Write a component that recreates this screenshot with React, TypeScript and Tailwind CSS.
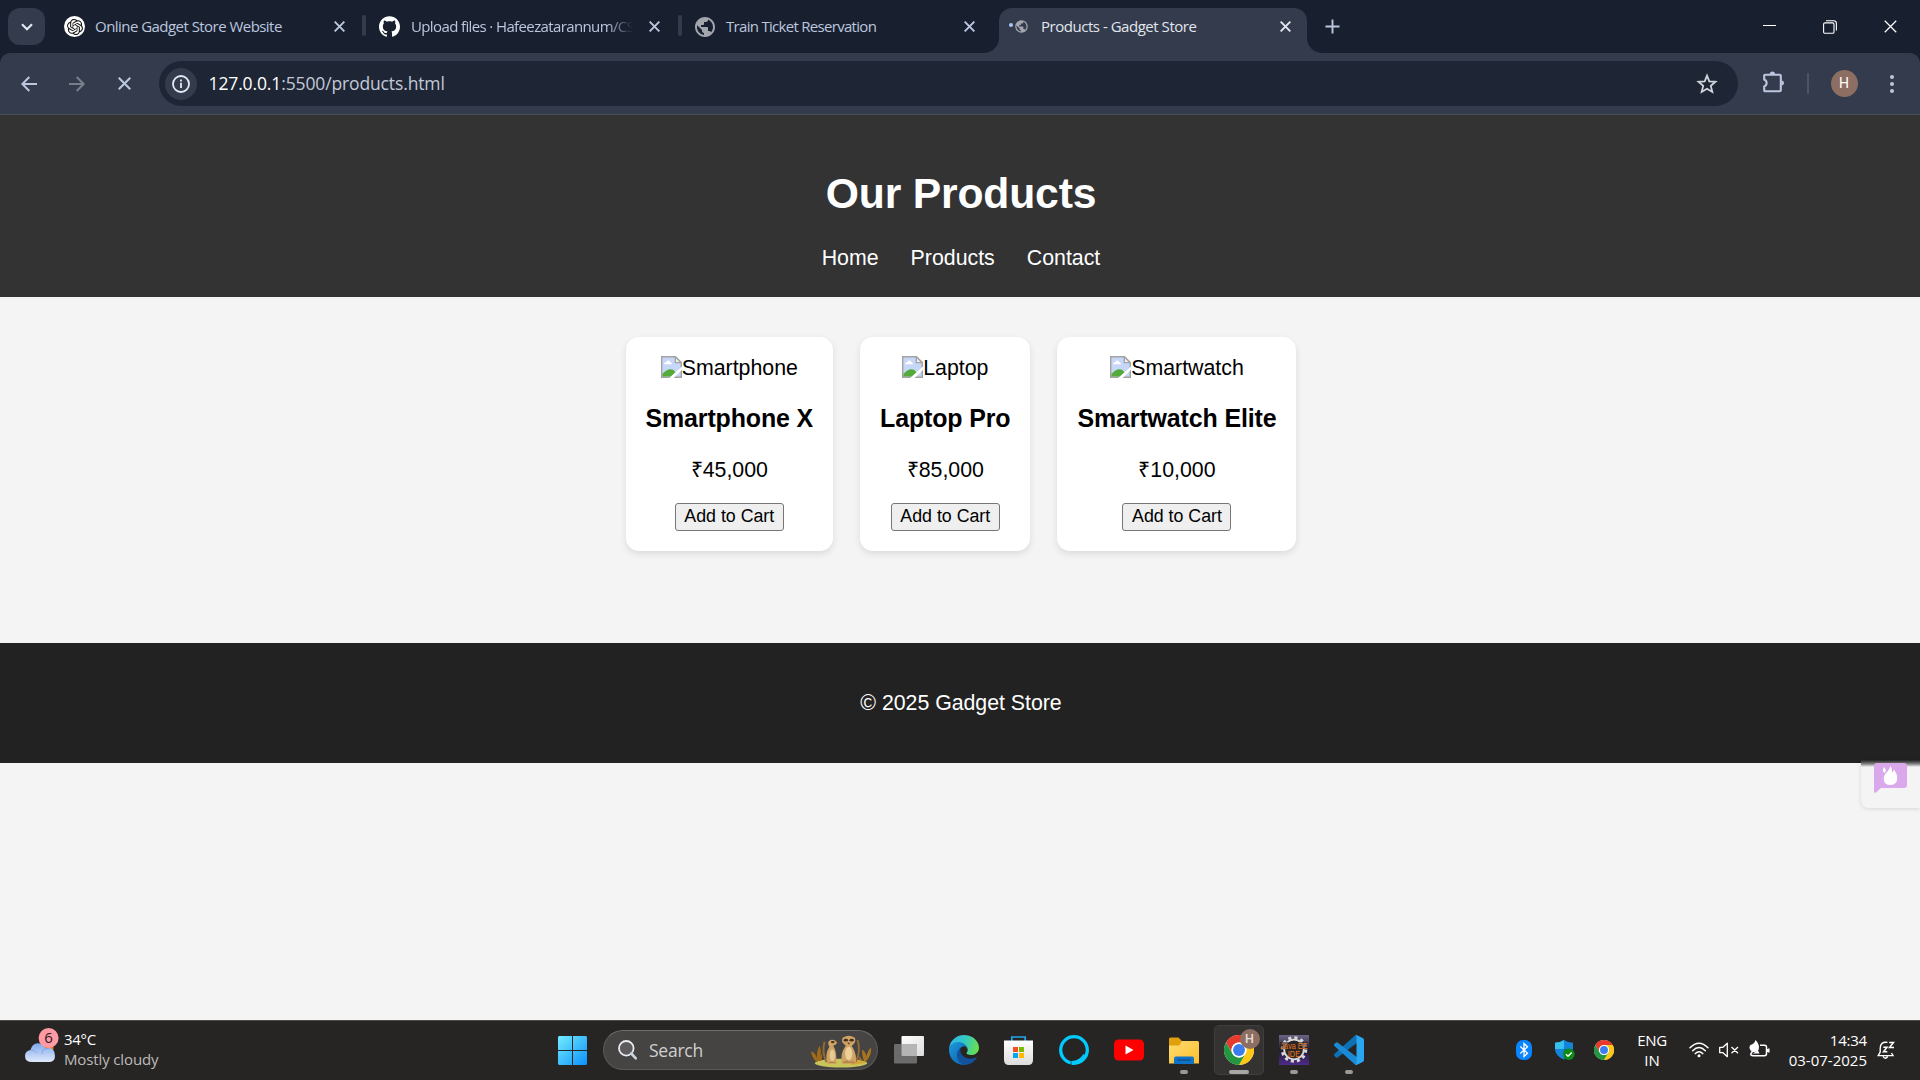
import React from 'react';
import { SiOpenai, SiGithub } from 'react-icons/si';
import { MdPublic } from 'react-icons/md';

function Close({ className = '', s = 11, w = 2.1 }: { className?: string; s?: number; w?: number }) {
  return (
    <svg width={s} height={s} viewBox="0 0 12 12" className={className} fill="none" stroke="currentColor" strokeWidth={w}>
      <path d="M.7 .7L11.3 11.3M11.3 .7L.7 11.3" />
    </svg>
  );
}

function TabStrip() {
  return (
    <div className="h-[53px] bg-[#182030] flex items-start text-[15px] leading-[22px] text-[#bcc6de]">
      <div className="ml-2 mt-2 w-[37px] h-[37px] rounded-[12px] bg-[#333b4c] flex items-center justify-center">
        <svg width="12" height="8" viewBox="0 0 12 8" fill="none" stroke="#e4e8f4" strokeWidth="2.2"><path d="M1 1.2L6 6.2L11 1.2" /></svg>
      </div>
      <div className="ml-[19px] w-[298px] h-[53px] flex items-center">
        <div className="w-[21px] h-[21px] rounded-full bg-white flex items-center justify-center">
          <SiOpenai size={16} color="#111" />
        </div>
        <span className="ml-[10px] pb-px w-[239px] whitespace-nowrap tracking-[-0.54px]">Online Gadget Store Website</span>
        <Close />
      </div>
      <div className="mt-[15px] w-[4px] h-[21px] rounded-[2px] bg-[#333b4c]" />
      <div className="ml-[13px] w-[299px] h-[53px] flex items-center">
        <SiGithub size={21} color="#fff" />
        <span className="ml-[11px] pb-px w-[222px] whitespace-nowrap overflow-hidden tracking-[-0.62px] [mask-image:linear-gradient(to_right,black_88%,transparent_100%)]">Upload files · Hafeezatarannum/CS</span>
        <Close className="ml-[16px]" />
      </div>
      <div className="mt-[15px] w-[4px] h-[21px] rounded-[2px] bg-[#333b4c]" />
      <div className="ml-[11px] w-[290px] h-[53px] flex items-center">
        <MdPublic size={24} color="#a3a7ad" />
        <span className="ml-[9px] pb-px w-[238px] whitespace-nowrap tracking-[-0.7px]">Train Ticket Reservation</span>
        <Close />
      </div>
      <div className="w-[16px] h-[53px] bg-[#333b4c]"><div className="w-[16px] h-[53px] bg-[#182030] rounded-br-[15px]" /></div>
      <div className="w-[308px] h-[53px] bg-[#182030]">
        <div className="mt-2 h-[45px] rounded-t-[13px] bg-[#333b4c] text-[#e2e6ee] flex items-center pb-2">
          <div className="ml-[10px] mb-1 w-[4px] h-[4px] rounded-full bg-[#a8c7fa]" />
          <MdPublic size={15} color="#a3a7ad" className="ml-[1px]" />
          <span className="ml-[12px] pb-px w-[239px] whitespace-nowrap tracking-[-0.47px]">Products - Gadget Store</span>
          <Close />
        </div>
      </div>
      <div className="w-[16px] h-[53px] bg-[#333b4c]"><div className="w-[16px] h-[53px] bg-[#182030] rounded-bl-[15px]" /></div>
      <svg className="ml-[2px] mt-[19px]" width="15" height="15" viewBox="0 0 15 15" fill="none" stroke="#bcc6de" strokeWidth="1.9"><path d="M7.5 .5V14.5M.5 7.5H14.5" /></svg>
      <div className="ml-auto mr-[23px] h-[53px] flex items-start text-white">
        <div className="mt-[25px] w-[13px] h-px bg-white" />
        <svg className="ml-[47px] mt-[20px]" width="14" height="14" viewBox="0 0 14 14" fill="none" stroke="#fff" strokeWidth="1.1"><rect x=".6" y="2.9" width="10.4" height="10.4" rx="1.4" /><path d="M3 .7H10.6Q13.4 .7 13.4 3.4V10.6" /></svg>
        <Close s={13} w={1.1} className="ml-[47px] mt-[20px]" />
      </div>
    </div>
  );
}

function Toolbar() {
  return (
    <div className="h-[62px] bg-[#182030]">
      <div className="h-[62px] bg-[#333b4c] rounded-t-[10px] border-b border-[#4a5057] flex items-center text-[#bcc6de]">
        <svg className="ml-[21px]" width="16" height="16" viewBox="0 0 16 16" fill="none" stroke="#bcc6de" strokeWidth="2"><path d="M16 8H1.5M8.3 1L1.4 8L8.3 15" /></svg>
        <svg className="ml-[32px]" width="16" height="16" viewBox="0 0 16 16" fill="none" stroke="#79808c" strokeWidth="2"><path d="M0 8H14.5M7.7 1L14.6 8L7.7 15" /></svg>
        <Close s={13} w={1.9} className="ml-[32.5px]" />
        <div className="ml-[28px] w-[1579px] h-[45px] rounded-full bg-[#1e2636] flex items-center">
          <div className="ml-[6px] w-[32px] h-[32px] rounded-full bg-[#333b4c] flex items-center justify-center">
            <svg width="18" height="18" viewBox="0 0 18 18" fill="none" stroke="#e6e9f2" strokeWidth="1.8"><circle cx="9" cy="9" r="8" /><path d="M9 7.8V13M9 4.6V6.5" /></svg>
          </div>
          <span className="ml-[12px] pb-px text-[17.5px] leading-[24px] tracking-[-0.13px] text-[#c3c9d6]"><span className="text-white">127.0.0.1</span>:5500/products.html</span>
          <svg className="ml-auto mr-[20px]" width="22" height="22" viewBox="0 0 22 22" fill="none" stroke="#d2d4dc" strokeWidth="1.8"><path d="M11 2.6L13.3 8.3L19.5 8.8L14.8 12.9L16.3 18.9L11 15.7L5.7 18.9L7.2 12.9L2.5 8.8L8.7 8.3Z" /></svg>
        </div>
        <svg className="ml-[24px] -mt-[4px]" width="23" height="23" viewBox="0 0 23 23"><path d="M3.2 4.8H17.8Q18.8 4.8 18.8 5.8V20.2Q18.8 21.2 17.8 21.2H3.2Q2.2 21.2 2.2 20.2V16.4A3.6 3.6 0 0 0 2.2 9.6V5.8Q2.2 4.8 3.2 4.8Z" fill="none" stroke="#bcc6de" strokeWidth="2.1" /><path d="M7.6 4A2.9 3.3 0 0 1 13.2 4ZM19.6 10.2A3.3 2.9 0 0 1 19.6 15.8Z" fill="#bcc6de" /></svg>
        <div className="ml-[22px] w-[2px] h-[21px] bg-[#4b5364]" />
        <div className="ml-[22px] w-[27px] h-[27px] rounded-full bg-[#8d6e63] text-white text-[14px] leading-[27px] text-center font-['Roboto']">H</div>
        <div className="ml-[32px] flex flex-col gap-[3px] items-center">
          <i className="w-1 h-1 rounded-full bg-[#bcc6de]" /><i className="w-1 h-1 rounded-full bg-[#bcc6de]" /><i className="w-1 h-1 rounded-full bg-[#bcc6de]" />
        </div>
      </div>
    </div>
  );
}

function BrokenImage() {
  return (
    <svg width="21" height="22" viewBox="0 0 21 22">
      <path d="M.7 .7H14.5L20.3 6.5V21.3H.7Z" fill="#c6d7f7" stroke="#a3a3a3" strokeWidth="1.4" />
      <path d="M3 8.2Q3 6.3 5 6.3Q5.6 4.2 7.6 4.4Q9 4.6 9.3 6.3Q11 6.4 11 8.2Z" fill="#fff" />
      <path d="M1.4 20.6V18Q7 11.5 12.5 14L14.5 16.5L10 20.6Z" fill="#55ab38" />
      <path d="M14.3 .9V6.7H20.1Z" fill="#f4f4f4" stroke="#a3a3a3" strokeWidth="1.3" />
      <path d="M8.3 22L21 10.6V13.8L12.6 22Z" fill="#fff" />
    </svg>
  );
}

function Card({ alt, name, price }: { alt: string; name: string; price: string }) {
  return (
    <div className="px-5 pt-[18px] pb-5 rounded-[13px] bg-white shadow-[0_3px_7px_rgba(0,0,0,0.1)] flex flex-col items-center text-black whitespace-nowrap">
      <div className="h-6 flex items-center leading-6"><BrokenImage /><span className="pt-[2px]">{alt}</span></div>
      <h3 className="mt-[25px] h-7 text-[24.96px] leading-7 font-bold tracking-[-0.13px]">{name}</h3>
      <p className="mt-[26px] h-6 leading-6">{price}</p>
      <button className="mt-[21px] h-7 w-[109px] rounded-[3px] border border-[#767676] bg-[#efefef] text-[17.777px] leading-[24px] pb-[2px]">Add to Cart</button>
    </div>
  );
}

function Page() {
  return (
    <div className="h-[905px] bg-[#f4f4f4] font-['Liberation_Sans',sans-serif] text-[21.333px]">
      <header className="h-[182px] bg-[#333] text-white flex flex-col items-center pt-[54px] pl-[2px]">
        <h1 className="text-[42.667px] leading-[48px] font-bold tracking-[-0.17px]">Our Products</h1>
        <nav className="mt-[29px] flex gap-8 leading-6">
          <a>Home</a><a>Products</a><a>Contact</a>
        </nav>
      </header>
      <main className="h-[346px] pt-[40px] pl-[2px] flex justify-center items-start gap-[27px]">
        <Card alt="Smartphone" name="Smartphone X" price="₹45,000" />
        <Card alt="Laptop" name="Laptop Pro" price="₹85,000" />
        <Card alt="Smartwatch" name="Smartwatch Elite" price="₹10,000" />
      </main>
      <footer className="relative h-[120px] pl-[2px] bg-[#222] text-white flex items-center justify-center leading-6 tracking-[-0.03px]">
        © 2025 Gadget Store
        <div className="absolute right-0 top-[117px] w-[59px] h-[48px] rounded-bl-[8px] bg-[#f4f4f4] shadow-[0_1px_4px_rgba(0,0,0,0.12)] flex flex-col">
          <div className="h-[7px] shrink-0 bg-gradient-to-b from-[#222] via-[#777] to-[#f4f4f4]" />
          <svg className="ml-[13px] -mt-[4px]" width="33" height="30" viewBox="0 0 33 30">
            <path d="M0 3Q0 0 3 0H30Q33 0 33 3V22Q33 25 30 25H7L2 29.5Q0 30.5 0 28Z" fill="#d9a9ec" />
            <path d="M16.500 3Q18.500 6 18 9.500Q19.800 8.500 20 6.500Q23.500 11 23.300 15.500Q23 22 16.500 22Q10 22 9.700 16Q9.700 12 13 9Q15.800 6 16.500 3ZM10 4Q12 5.500 11.800 7.500Q11.400 9.500 10.200 9.800Q8.800 9 8.900 7Q9 5.500 10 4Z" fill="#fff" />
          </svg>
        </div>
      </footer>
    </div>
  );
}

function Chrome({ s }: { s: number }) {
  return (
    <svg width={s} height={s} viewBox="0 0 48 48">
      <circle cx="24" cy="24" r="24" fill="#fff" />
      <path d="M3.200 12A24 24 0 0 1 44.800 12H24A12 12 0 0 0 13.600 30Z" fill="#e8392d" />
      <path d="M44.800 12A24 24 0 0 1 24 48L34.400 30A12 12 0 0 0 24 12Z" fill="#fdc716" />
      <path d="M24 48A24 24 0 0 1 3.200 12L13.600 30A12 12 0 0 0 34.400 30Z" fill="#24963f" />
      <circle cx="24" cy="24" r="12" fill="#fff" />
      <circle cx="24" cy="24" r="9.500" fill="#3b7ded" />
    </svg>
  );
}

function Meerkats() {
  return (
    <svg width="62" height="33" viewBox="0 0 64 34">
      <ellipse cx="32" cy="29" rx="27" ry="4.500" fill="#c9c55a" />
      <path d="M42 31Q58 29 59 28Q52 25 44 25Z" fill="#d3a93c" />
      <path d="M6 27Q2 23 1 17Q6 18 7 24Q7 15 10 11Q13 19 9 27ZM8 27L13 18L12 26Z" fill="#a06a18" />
      <path d="M56 27Q53 21 54 15Q58 18 58 22Q60 15 63 13Q64 20 58 27ZM54 26Q51 22 49 20Q51 26 53 27Z" fill="#a87320" />
      <path d="M17 28Q12 18 15 7M47 28Q53 16 49 5" fill="none" stroke="#946a35" strokeWidth="2" />
      <path d="M18 29Q15 20 20 12Q17 7 21 5Q26 4 28 8Q27 10 24 11Q28 17 27 29Z" fill="#cfa265" />
      <ellipse cx="23" cy="21" rx="2.700" ry="6" fill="#e8cb94" />
      <path d="M33 29Q31 18 37 11Q31 7 34 2.500Q40 -.8 46 2.500Q48.500 7 43 11Q49 20 47 29Z" fill="#cfa265" />
      <ellipse cx="40" cy="19" rx="3.700" ry="7" fill="#ecd09a" />
      <ellipse cx="37" cy="5.300" rx="2.300" ry="1.500" fill="#463022" /><ellipse cx="43" cy="5.300" rx="2.300" ry="1.500" fill="#463022" /><ellipse cx="23.500" cy="7.300" rx="2" ry="1.200" fill="#463022" />
      <path d="M38.500 8H41.500L40 9.700Z" fill="#5b3a22" />
      <path d="M33 29Q38 24 41 28Q44 25 47 29ZM18 29Q22 26 28 29Z" fill="#b88548" />
    </svg>
  );
}

function Weather() {
  return (
    <svg width="36" height="36" viewBox="0 0 36 36" className="shrink-0">
      <defs><linearGradient id="cl" x1="0" y1="0" x2="0" y2="1"><stop offset="0" stopColor="#7fa8ec" /><stop offset="1" stopColor="#dfe9fb" /></linearGradient></defs>
      <circle cx="22" cy="20" r="6.500" fill="#f27a1a" />
      <path d="M7 34Q0 34 0 28Q0 23 5.500 22Q7 15.500 13 15.200Q18 15.200 20 20Q30 18.500 30 28Q30 34 23.500 34Z" fill="url(#cl)" />
      <path d="M5.500 22Q10 22 12 25.500M17 26Q17 20 24 20.500" fill="none" stroke="#7aa0df" strokeWidth=".8" />
      <circle cx="23.600" cy="10" r="10" fill="#ff99a4" />
      <text x="23.600" y="15.200" textAnchor="middle" fontSize="15" fontFamily="Open Sans, sans-serif" fill="#2a1a1c">6</text>
    </svg>
  );
}

function AppCell({ children, bar }: { children: React.ReactNode; bar?: boolean }) {
  return (
    <div className="w-[55px] h-[55px] flex flex-col items-center">
      <div className="h-[30px] mt-[11px] flex items-center">{children}</div>
      {bar && <div className="mt-[5px] w-2 h-1 rounded-full bg-[#9b9998]" />}
    </div>
  );
}

function Taskbar() {
  return (
    <div className="h-[60px] bg-[#272524] border-t border-[#4b4a49] flex items-start text-white text-[15px] leading-[20px]">
      <div className="w-[545px] h-[59px] pl-[25px] flex">
        <div className="mt-[7px]"><Weather /></div>
        <div className="ml-[3px] mt-[8px]"><div className="tracking-[-0.3px]">34°C</div><div className="text-[#bdbbba] tracking-[-0.13px]">Mostly cloudy</div></div>
      </div>
      <div className="w-[55px] h-[59px] flex justify-center pt-[15px]">
        <svg width="29" height="29" viewBox="0 0 29 29">
          <defs><linearGradient id="wn" x1="0" y1="0" x2="1" y2="1"><stop offset="0" stopColor="#74ecff" /><stop offset="1" stopColor="#0a91fb" /></linearGradient></defs>
          <path d="M1 0H14V14H0V1ZM15 0H28L29 1V14H15ZM0 15H14V29H1L0 28ZM15 15H29V28L28 29H15Z" fill="url(#wn)" />
        </svg>
      </div>
      <div className="ml-[3px] mt-[9px] w-[275px] h-[40px] rounded-full bg-[#454443] border border-[#5a5958] border-t-[#706f6e] flex items-center">
        <svg className="ml-[14px]" width="19" height="20" viewBox="0 0 19 20" fill="none"><circle cx="8.300" cy="8.300" r="7.300" stroke="#e8ebf2" strokeWidth="1.800" fill="#5c5a5a" /><path d="M13.300 13.500L17.800 18.300" stroke="#cdd3de" strokeWidth="2.600" strokeLinecap="round" /></svg>
        <span className="ml-[12px] text-[17.500px] tracking-[-0.25px] text-[#d0cfce]">Search</span>
        <div className="ml-auto mr-[5px] mt-[2px]"><Meerkats /></div>
      </div>
      <div className="ml-[3px] flex pt-[3px]">
        <AppCell>
          <svg width="30" height="28" viewBox="0 0 30 28">
            <defs><linearGradient id="tv" x1="0" y1="0" x2="1" y2="1"><stop offset="0" stopColor="#fff" /><stop offset="1" stopColor="#dcdcdc" /></linearGradient></defs>
            <rect x="7.500" y="0" width="22.500" height="20" rx="1" fill="url(#tv)" /><rect x="0" y="8" width="23" height="19.500" rx="1" fill="#6b6b6b" /><path d="M7.500 8H22Q23 8 23 9V20H8.500Q7.500 20 7.500 19Z" fill="#b5b5b5" />
          </svg>
        </AppCell>
        <AppCell>
          <svg width="30" height="30" viewBox="0 0 256 256">
            <defs>
              <linearGradient id="e1" x1="0" y1=".3" x2="1" y2=".5"><stop offset="0" stopColor="#2cb7ea" /><stop offset=".5" stopColor="#35c8c3" /><stop offset="1" stopColor="#68e04c" /></linearGradient>
              <linearGradient id="e2" x1="0" y1="0" x2="1" y2="1"><stop offset="0" stopColor="#1b9de2" /><stop offset="1" stopColor="#0c59a4" /></linearGradient>
            </defs>
            <path d="M231 190.500c-3.400 1.800-6.900 3.300-10.500 4.700a101.900 101.900 0 0 1-35.900 6.500c-47.300 0-88.500-32.500-88.500-74.300 0-11.400 6.500-21.900 16.500-27.300-42.800 1.800-53.800 46.400-53.800 72.500 0 74 68.100 81.400 82.800 81.400 7.900 0 19.800-2.300 27-4.600l1.300-.4a128.300 128.300 0 0 0 66.600-52.800 4 4 0 0 0-5.500-5.700z" fill="#12519b" />
            <path d="M105.700 241.400a79.200 79.200 0 0 1-22.700-21.300 80.700 80.700 0 0 1 29.500-120c3.200-1.500 8.500-4.100 15.600-4a32.400 32.400 0 0 1 25.700 13 31.900 31.900 0 0 1 6.300 18.700c0-.2 24.500-79.600-80-79.600-43.900 0-80 41.600-80 78.200a130.200 130.200 0 0 0 12.100 56 128 128 0 0 0 156.400 67 75.500 75.500 0 0 1-62.800-8z" fill="url(#e2)" />
            <path d="M152.300 148.900c-.9 1-3.400 2.500-3.400 5.600 0 2.600 1.700 5.200 4.800 7.300 14.300 10 41.400 8.600 41.500 8.600a59.600 59.600 0 0 0 30.300-8.300A61.400 61.400 0 0 0 256 109.200c.3-22.400-8-37.300-11.300-43.900C223.500 23.900 177.700 0 128 0A128 128 0 0 0 0 126.200c.5-36.500 36.800-66 80-66 3.500 0 23.500.3 42 10.100 16.300 8.600 24.900 19 30.800 29.200 6.200 10.700 7.300 24.100 7.300 29.500 0 5.300-2.700 13.300-7.800 19.900z" fill="url(#e1)" />
          </svg>
        </AppCell>
        <AppCell>
          <svg width="30" height="30" viewBox="0 0 30 30">
            <defs><linearGradient id="st" x1="0" y1="0" x2="0" y2="1"><stop offset="0" stopColor="#fff" /><stop offset="1" stopColor="#dcdcdc" /></linearGradient></defs>
            <path d="M7.800 6V2H21.200V6" fill="none" stroke="#21a5ec" strokeWidth="1.700" />
            <path d="M0 5.500H29V25Q29 30 24 30H5Q0 30 0 25Z" fill="url(#st)" />
            <path d="M9 12H14V17H9Z" fill="#f25022" /><path d="M15 12H20V17H15Z" fill="#7fba00" /><path d="M9 18H14V23H9Z" fill="#00a4ef" /><path d="M15 18H20V23H15Z" fill="#ffb900" />
          </svg>
        </AppCell>
        <AppCell>
          <svg width="30" height="30" viewBox="0 0 30 30">
            <circle cx="15" cy="15" r="13.300" fill="none" stroke="#00caff" strokeWidth="3.300" />
            <path d="M12.700 26V30L15 29.800Q22 27 26 20L24.500 19Q20.500 25.500 12.700 26Z" fill="#00caff" />
            <path d="M11.500 26.600L12.700 27V30.300L11.500 30Z" fill="#272524" opacity=".55" />
          </svg>
        </AppCell>
        <AppCell>
          <svg width="30" height="22" viewBox="0 0 30 22"><rect width="30" height="21" y=".5" rx="4.500" fill="#f00" /><path d="M11.500 6.500L19.500 11L11.500 15.500Z" fill="#fff" /></svg>
        </AppCell>
        <AppCell bar>
          <svg width="30" height="27" viewBox="0 0 30 27">
            <defs><linearGradient id="fo" x1="0" y1="0" x2="1" y2="1"><stop offset="0" stopColor="#ffdc73" /><stop offset="1" stopColor="#fcbf2c" /></linearGradient></defs>
            <path d="M0 2Q0 .5 1.500 .5H9.500L13 4H24V10H0Z" fill="#dfa00c" /><path d="M0 8.500H10L13 4H28.500Q30 4 30 5.500V26.500H0Z" fill="url(#fo)" /><path d="M5 27V21.500Q5 19.500 7 19.500H23Q25 19.500 25 21.500V27Z" fill="#1173c6" /><path d="M8.500 23H21.500" stroke="#0b4e8c" strokeWidth="1.300" />
          </svg>
        </AppCell>
        <div className="w-[55px] h-[55px] flex justify-center">
          <div className="relative mt-px w-[50px] h-[50px] rounded-[5px] bg-[#353332] border border-[#403e3d] flex flex-col items-center">
            <div className="mt-[9px]"><Chrome s={30} /></div>
            <div className="absolute left-[25px] top-[3px] w-5 h-5 rounded-full bg-[#8d6e63] text-[#e6dcd8] text-[12.500px] leading-5 text-center font-['Roboto'] font-medium">H</div>
            <div className="mt-[5px] w-5 h-1 rounded-full bg-[#a9a7a6]" />
          </div>
        </div>
        <AppCell bar>
          <svg width="30" height="30" viewBox="0 0 30 30">
            <defs><linearGradient id="ec" x1="0" y1="0" x2="0" y2="1"><stop offset="0" stopColor="#6c6486" /><stop offset=".5" stopColor="#221c2c" /><stop offset="1" stopColor="#4d2b8c" /></linearGradient></defs>
            <rect width="30" height="30" fill="url(#ec)" /><circle cx="15" cy="14.500" r="11.800" fill="none" stroke="#d9d9d9" strokeWidth="3" strokeDasharray="3.100 3.080" /><circle cx="15" cy="14.500" r="9.800" fill="#2b2526" stroke="#d9d9d9" strokeWidth="1.800" />
            <path d="M1 7H29V14H1Z" fill="#2b2526" opacity=".6" />
            <text x="15" y="14" textAnchor="middle" fontSize="9" textLength="27" lengthAdjust="spacingAndGlyphs" fontFamily="Liberation Sans" fill="#e8791a">Java EE</text>
            <text x="15" y="21.500" textAnchor="middle" fontSize="9" textLength="12.500" lengthAdjust="spacingAndGlyphs" fontFamily="Liberation Sans" fill="#e8791a">IDE</text>
          </svg>
        </AppCell>
        <AppCell bar>
          <svg width="30" height="30" viewBox="0 0 100 100">
            <path d="M96.500 10.800L75.900 .9a6.200 6.200 0 0 0-7.100 1.200L1.300 63.600a4.200 4.200 0 0 0 0 6.200l5.500 5a4.200 4.200 0 0 0 5.300.2L93.400 13.400a4.100 4.100 0 0 1 6.600 3.300v-.3a6.300 6.300 0 0 0-3.500-5.600z" fill="#0f70b3" />
            <path d="M96.500 89.200L75.900 99.100a6.200 6.200 0 0 1-7.100-1.200L1.300 36.400a4.200 4.200 0 0 1 0-6.200l5.500-5a4.200 4.200 0 0 1 5.300-.2L93.400 86.600a4.100 4.100 0 0 0 6.600-3.300v.3a6.300 6.300 0 0 1-3.500 5.600z" fill="#1b8ad6" />
            <path d="M75.900 99.100a6.200 6.200 0 0 1-7.100-1.200 3.700 3.700 0 0 0 6.200-2.600V4.700a3.700 3.700 0 0 0-6.200-2.600A6.200 6.200 0 0 1 75.900.9l20.600 9.900A6.300 6.300 0 0 1 100 16.400v67.200a6.300 6.300 0 0 1-3.500 5.600z" fill="#2aa5f0" />
          </svg>
        </AppCell>
      </div>
      <div className="ml-auto h-[59px] flex items-center pb-px">
        <svg width="16" height="20" viewBox="0 0 16 20"><rect width="16" height="20" rx="7" fill="#0a84ff" /><path d="M4.300 6.500L11.500 13.200L8 16.500V3.500L11.500 6.800L4.300 13.500" fill="none" stroke="#fff" strokeWidth="1.300" /></svg>
        <svg className="ml-[23px]" width="20" height="20" viewBox="0 0 20 20">
          <path d="M9 0Q13 2.800 18 2.800V9Q18 16 9 19.500Q0 16 0 9V2.800Q5 2.800 9 0Z" fill="#1583d8" /><path d="M9 0V9H0V2.800Q5 2.800 9 0Z" fill="#35c0ee" /><path d="M9 9H18Q18 16 9 19.500Z" fill="#0b5cb5" /><circle cx="13.800" cy="14.200" r="5.800" fill="#0e8a16" /><path d="M11 14.300L13 16.300L16.700 12.500" fill="none" stroke="#fff" strokeWidth="1.400" />
        </svg>
        <div className="ml-[19px]"><Chrome s={20} /></div>
        <div className="ml-[20px] w-[36px] text-center"><div className="tracking-[-0.3px]">ENG</div><div>IN</div></div>
        <svg className="ml-[19px]" width="20" height="16" viewBox="0 0 20 16" fill="none" stroke="#fff" strokeWidth="1.500" strokeLinecap="round"><path d="M1 5.700Q10 -3.300 19 5.700M3.700 8.700Q10 2.300 16.300 8.700M6.300 11.600Q10 7.800 13.700 11.600" /><circle cx="10" cy="13.700" r="1.500" fill="#fff" stroke="none" /></svg>
        <svg className="ml-[10px]" width="20" height="16" viewBox="0 0 20 16" fill="none" stroke="#fff" strokeWidth="1.300" strokeLinejoin="round"><path d="M.7 5.300H4L8.300 1.300V14.700L4 10.700H.7ZM12.500 5L19 11.300M19 5L12.500 11.300" /></svg>
        <svg className="ml-[10px] -mt-[2px]" width="21" height="18" viewBox="0 0 21 18"><path d="M11 5.300H15.500Q17.500 5.300 17.500 7.300V13.500Q17.500 15.700 15.500 15.700H4Q2 15.700 1.500 14M18.500 9V12" fill="none" stroke="#fff" strokeWidth="1.500" /><path d="M19.800 8.500V12.500" stroke="#fff" strokeWidth="1.500" /><path d="M6.500 0Q10 3.500 10 7.500Q10 12.500 4 12L2 14.500L1 13.500L2.500 11.500Q-1 8 1.500 5Q5.500 4 6.500 0Z" fill="#fff" /><path d="M3.500 13.500H10.500L9 10.500Z" fill="#fff" /></svg>
        <div className="ml-[18px] -mt-px w-[79px] text-right whitespace-nowrap"><div className="tracking-[-0.2px]">14:34</div><div>03-07-2025</div></div>
        <svg className="ml-[10px] mr-[25px]" width="18" height="19" viewBox="0 0 18 19" fill="none" stroke="#fff" strokeWidth="1.400"><path d="M10.500 1.400Q3.200 .3 3.200 7.500V11L1.200 14.600H16L14.500 12M6 15.500Q8.200 19 10.700 15.500" /><path d="M6.300 6.200H10L6.500 10.800H10.300M12.200 1.400H16.500L12.500 6.500H17" strokeWidth="1.500" /></svg>
      </div>
    </div>
  );
}

export default function App() {
  return (
    <div className="w-[1920px] h-[1080px] overflow-hidden font-['Open_Sans',sans-serif]">
      <TabStrip />
      <Toolbar />
      <Page />
      <Taskbar />
    </div>
  );
}
